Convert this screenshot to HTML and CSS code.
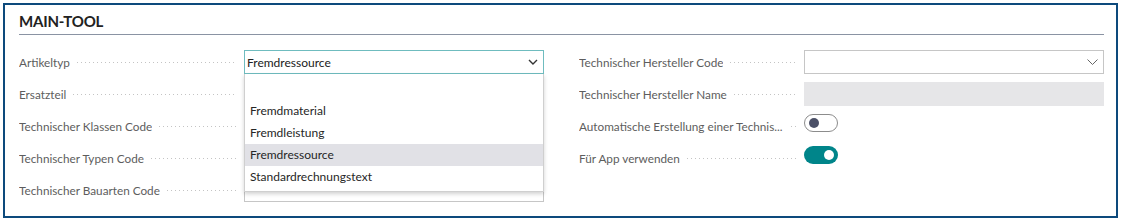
FILE: index.html
```html
<!DOCTYPE html>
<html lang="de">
<head>
<meta charset="utf-8">
<link rel="stylesheet" href="styles.css">
</head>
<body>
<div class="card">
  <div class="header"><h1 class="title">MAIN-TOOL</h1></div>
  <div class="grid">
    <div class="col">
      <div class="row">
        <div class="label"><span class="ltext">Artikeltyp</span><i class="dots"></i></div>
        <div class="control">
          <div class="select focused"><span class="value">Fremdressource</span>
            <svg class="chev dark" width="10" height="6" viewBox="0 0 10 6"><path d="M1 1 L5 5 L9 1" fill="none" stroke="#333" stroke-width="1.4"/></svg>
          </div>
          <div class="dropdown">
            <div class="opt blank"></div>
            <div class="opt">Fremdmaterial</div>
            <div class="opt">Fremdleistung</div>
            <div class="opt sel">Fremdressource</div>
            <div class="opt">Standardrechnungstext</div>
          </div>
        </div>
      </div>
      <div class="row">
        <div class="label"><span class="ltext">Ersatzteil</span><i class="dots"></i></div>
        <div class="control"><div class="input"></div></div>
      </div>
      <div class="row">
        <div class="label"><span class="ltext">Technischer Klassen Code</span><i class="dots"></i></div>
        <div class="control"><div class="input"></div></div>
      </div>
      <div class="row">
        <div class="label"><span class="ltext">Technischer Typen Code</span><i class="dots"></i></div>
        <div class="control"><div class="input"></div></div>
      </div>
      <div class="row">
        <div class="label"><span class="ltext">Technischer Bauarten Code</span><i class="dots"></i></div>
        <div class="control"><div class="input"></div></div>
      </div>
    </div>
    <div class="col">
      <div class="row">
        <div class="label"><span class="ltext">Technischer Hersteller Code</span><i class="dots"></i></div>
        <div class="control">
          <div class="select"><span class="value"></span>
            <svg class="chev" width="11" height="6" viewBox="0 0 11 6"><path d="M0.5 0.5 L5.5 5.5 L10.5 0.5" fill="none" stroke="#666" stroke-width="1"/></svg>
          </div>
        </div>
      </div>
      <div class="row">
        <div class="label"><span class="ltext">Technischer Hersteller Name</span><i class="dots"></i></div>
        <div class="control"><div class="input disabled"></div></div>
      </div>
      <div class="row">
        <div class="label"><span class="ltext">Automatische Erstellung einer Technis...</span><i class="dots short"></i></div>
        <div class="control"><div class="toggle off"><span class="knob"></span></div></div>
      </div>
      <div class="row">
        <div class="label"><span class="ltext">Für App verwenden</span><i class="dots"></i></div>
        <div class="control"><div class="toggle on"><span class="knob"></span></div></div>
      </div>
    </div>
  </div>
</div>
</body>
</html>
```

FILE: styles.css
```css
* { box-sizing: border-box; }
html, body { margin: 0; padding: 0; background: #fff; }
body {
  font-family: Lato, "Open Sans", sans-serif;
  font-size: 11.75px;
  color: #212121;
}
.card {
  margin: 3px 0 0 3px;
  width: 1115px;
  height: 215px;
  border: 2px solid #0d4a7c;
  padding: 0 12px 0 14px;
}
.header {
  border-bottom: 1px solid #8a93a3;
  height: 30px;
  display: flex;
  align-items: flex-end;
}
.title {
  margin: 0;
  font-size: 15px;
  font-weight: 700;
  line-height: 20px;
  padding-bottom: 3px;
  color: #222;
  letter-spacing: -0.2px;
}
.grid {
  display: grid;
  grid-template-columns: 525px 525px;
  column-gap: 35px;
  margin-top: 15px;
}
.col {
  display: flex;
  flex-direction: column;
  gap: 8px;
}
.row {
  display: grid;
  grid-template-columns: 225px 1fr;
  height: 24px;
  align-items: center;
}
.label {
  display: flex;
  align-items: center;
  min-width: 0;
  color: #5d5d5d;
  padding-right: 7px;
}
.ltext {
  white-space: nowrap;
  overflow: hidden;
}
.dots {
  flex: 1;
  min-width: 8px;
  height: 1px;
  margin-left: 7px;
  margin-top: 1px;
  background: linear-gradient(to right, #c4c4c4 1px, transparent 1px) 0 0 / 4px 1px repeat-x;
}
.dots.short {
  min-width: 2px;
  margin-left: 8px;
}
.control {
  position: relative;
  height: 24px;
}
.select, .input {
  height: 24px;
  border: 1px solid #c6c6c6;
  background: #fff;
  display: flex;
  align-items: center;
  padding: 0 5px 0 2px;
}
.select { justify-content: space-between; }
.select.focused { border-color: #6fbcbf; }
.value { color: #212121; font-size: 12px; }
.input.disabled { background: #e6e6e8; border-color: #e6e6e8; }
.dropdown {
  position: absolute;
  top: 24px;
  left: 0;
  width: 300px;
  background: #fff;
  border: 1px solid #cfcfcf;
  border-top: none;
  box-shadow: 0 2px 4px rgba(0,0,0,0.18);
  padding: 4px 0 3px;
  z-index: 2;
}
.opt {
  height: 22px;
  line-height: 22px;
  padding-left: 5px;
  color: #262626;
  font-size: 12px;
}
.opt.sel { background: #e1e1e6; }
.toggle {
  width: 34px;
  height: 18px;
  border-radius: 9px;
  display: flex;
  align-items: center;
  padding: 0 4px;
}
.toggle.off { border: 1px solid #8c8c8c; background: #fff; justify-content: flex-start; }
.toggle.on { background: #00858a; justify-content: flex-end; }
.knob { width: 10px; height: 10px; border-radius: 50%; }
.off .knob { background: #4b5067; }
.on .knob { background: #fff; }
```
